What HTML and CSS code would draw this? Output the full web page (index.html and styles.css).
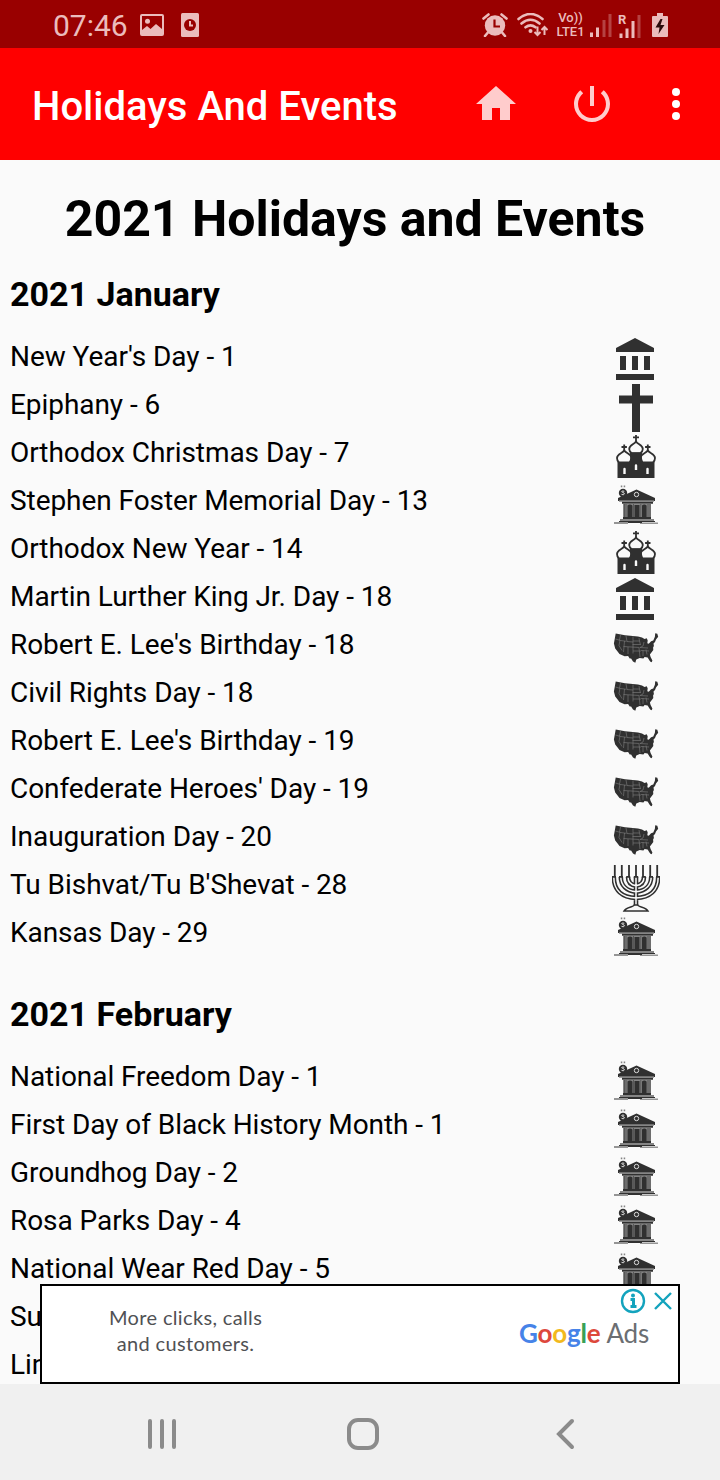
FILE: index.html
```html
<!DOCTYPE html>
<html lang="en">
<head>
<meta charset="UTF-8" />
<meta name="viewport" content="width=device-width, initial-scale=1.0"/>
<title>Holidays And Events</title>
<link rel="stylesheet" href="styles.css">
</head>
<body>

<!-- Icon shapes used by the list -->
<svg class="sprites" xmlns="http://www.w3.org/2000/svg">
  <symbol id="federal" viewBox="0 0 24 24">
    <path d="M4 10v7h3v-7H4zm6 0v7h3v-7h-3zM2 22h19v-3H2v3zm14-12v7h3v-7h-3zM11.500 1L2 6v2h19V6l-9.500-5z"/>
  </symbol>
  <symbol id="cross" viewBox="0 0 48 48">
    <path d="M20 0h8v11.500h13v8H28V48h-8V19.500H7v-8h13z"/>
  </symbol>
  <symbol id="orthodox" viewBox="0 0 48 48">
    <path d="M5.500 29.500H18V19.500h12v10h12.500V46h-37z"/>
    <path class="dome" d="M24 9.500c2 3 6.800 3.500 6.800 7.500 0 2-1.200 3.300-2.500 4.200h-8.600c-1.300-.9-2.500-2.200-2.500-4.200 0-4 4.800-4.500 6.800-7.500z"/>
    <path class="dome" d="M12.200 18.500c2 3 7.300 3.200 7.300 7.500 0 1.800-.9 3.500-2 4.500H7c-1.100-1-2-2.700-2-4.500 0-4.300 5.200-4.500 7.200-7.500zM35.800 18.500c2 3 7.200 3.200 7.200 7.500 0 1.800-.9 3.500-2 4.500H30.500c-1.100-1-2-2.700-2-4.500 0-4.300 5.300-4.500 7.300-7.500z"/>
    <path d="M18.500 20.500h11l.5 6 1.500 6-2 2H19l-2-2 1.200-6z"/>
    <path class="thin" d="M24 3v7M21 5.300h6M12.200 12.500v7M9.500 15h5.400M35.800 12.500v7M33.100 15h5.400"/>
    <path class="gap" d="M11.300 42v-5a1.200 1.200 0 0 1 2.400 0v5zM22.800 38v-4.500a1.200 1.200 0 0 1 2.400 0V38zM34.300 42v-5a1.200 1.200 0 0 1 2.400 0v5z"/>
  </symbol>
  <symbol id="observance" viewBox="0 0 48 48">
    <path d="M24.500 9.500L43 18v3H6v-3z"/>
    <path class="grey" d="M7 20.300h35v1.500H7z"/>
    <path d="M10 21.800h31v2H10zM11 37h28v2.200H11z"/>
    <path class="grey" d="M11 23.800h28V37H11z"/>
    <path d="M15.500 25.500q2.500-2 5 0V37h-5zM22.500 25h5v12h-5zM30 25.500q2.300-2 4.600 0V37H30z"/>
    <path class="lines" d="M12.500 24v13M14 24v13M21.500 24v13M28.800 24v13M36 24v13M38 24v13"/>
    <path class="grey" d="M8 39h34v2H8z"/>
    <path d="M7 41h36v1H7zM2 42.400h14v1H2zM16 42h14v1H16zM28 42.800h18v.8H28z"/>
    <circle cx="11" cy="13" r="4.200"/>
    <path class="gapline" d="M12.300 11.300q-2.600-1-2.600.5 2.800.9 2.700 2.200-1 1.500-2.900.3"/>
    <circle class="ring" cx="24.500" cy="14.500" r="2.200"/>
    <path class="grey" d="M8.800 5.500h1.500V7.200H8.800zM11.700 5.500h1.500V7.200h-1.500z"/>
  </symbol>
  <symbol id="states" viewBox="0 0 48 48">
    <path d="M3.700 9.500l9.300 1.700 13 1.300 4 1 2.500 1.500 2.300-.8.900 2.300-.4 2.700 1.400.6 2.400-2.600 2.200-.6 1.600-3.800L43.200 9.300l2.100.4.900 3-2.200 2.700-1 2.500-1.500 1.500.4 2.500-.8 1.700.2 2.500-3.400 4.500.7 2.300 1.800 3.500-.7 1.800-1.600-.6-2.500-4.200-3-.3-1.200 1.300-3.700-.3-3.400 1.500-1 3.200-2.300-1.200-1.900-3-1.400-.2-1.600-2.300-3.500.2-5.100-2.200-1.900-2.500-2.400-3-1.300-5.200z"/>
    <path class="borders" d="M8.500 11l-1 5M3.500 15l5 1.500 6 .8M8 16l-1 5.500 3 5M12.500 17l-1 11M14 12l1 5.500 6 .5M21 12.500v17M11.500 22.500l16 1M16 23v7M21 17h6.500l1 4M20.500 20.500h8M27 14l.5 3M27 24l1 9M21 27h8M32 18l-1 4-3 1.500 8 .5M29 26.500l8 .5M31 26v6M34 25.500l1 5"/>
  </symbol>
  <symbol id="menorah" viewBox="0 0 48 48">
    <path class="arm" d="M24 13v30M1.800 13c0 13.500 8.500 20.500 22.200 21 13.700-.5 22.200-7.500 22.200-21M8.800 13c0 8.500 6 14 15.200 14.800 9.200-.8 15.200-6.300 15.200-14.800M16 13c0 5 3 8 8 8.800 5-.8 8-3.800 8-8.800"/>
    <path class="arm-in" d="M24 13v30M1.800 13c0 13.500 8.500 20.500 22.200 21 13.700-.5 22.200-7.500 22.200-21M8.800 13c0 8.500 6 14 15.200 14.800 9.200-.8 15.200-6.300 15.200-14.800M16 13c0 5 3 8 8 8.800 5-.8 8-3.800 8-8.800"/>
    <path class="thin" d="M2.800 1v11.500M9.800 1v11.500M17 1v11.500M24 1v11.500M31 1v11.500M38.200 1v11.500M45.200 1v11.500M0 12.800h4M7 12.800h4M14.200 12.800h4M21.800 12.800h4.400M29.800 12.800h4M37 12.800h4M44 12.800h4"/>
    <path class="foot" d="M22.300 41c-.3 2-8.300 2-10.300 6h24c-2-4-10-4-10.300-6z"/>
  </symbol>
</svg>

<div class="phone">

  <!-- Status bar -->
  <div class="status-bar">
    <span class="clock">07:46</span>
    <svg class="picture" width="24" height="22" viewBox="0 0 24 22">
      <path fill-rule="evenodd" d="M2 0h20a2 2 0 0 1 2 2v18a2 2 0 0 1-2 2H2a2 2 0 0 1-2-2V2A2 2 0 0 1 2 0zM2 2v14l5-4 3.500 3L16 10l6 5V2z"/>
      <circle cx="7.500" cy="7.200" r="2.500"/>
    </svg>
    <svg class="alarm-note" width="18" height="24" viewBox="0 0 18 24">
      <rect width="18" height="24" rx="1.500"/>
      <circle class="hole" cx="9" cy="12" r="6"/>
      <path class="hand" d="M9 8v4.500h3"/>
    </svg>

    <svg class="alarm" width="26" height="24" viewBox="0 0 26 24">
      <circle cx="13" cy="12.500" r="10.200"/>
      <path class="hole-line" d="M12.500 6.500v7H18"/>
      <path class="stroke" d="M1.500 5.500l5-4M24.500 5.500l-5-4M5.500 20l-2.500 3M20.500 20l2.500 3"/>
    </svg>
    <svg class="wifi" width="31" height="24" viewBox="0 0 31 24">
      <path class="stroke" d="M1.500 6q12-10 24 0M4.500 10.500q9-7.500 18 0M8.500 14.300q5-4 10 0"/>
      <circle cx="13.500" cy="18" r="2"/>
      <path class="arrow" d="M20.500 13.500v8M17.500 19l3 3 3-3M27.500 22v-8M24.500 17l3-3 3 3"/>
    </svg>
    <span class="volte"><span>Vo))</span><span>LTE1</span></span>
    <svg class="signal" width="22" height="24" viewBox="0 0 22 24">
      <path d="M0 19.500h3V24H0zM6 14.500h3V24H6z"/>
      <path class="dim" d="M12.500 7h3v17h-3zM18.500 1h3v23h-3z"/>
    </svg>
    <svg class="signal-r" width="23" height="25" viewBox="0 0 23 25">
      <text x="0" y="10.500">R</text>
      <path d="M1.500 20.500h3V25h-3zM7.500 15.500h3V25h-3zM13.500 8h3v17h-3z"/>
      <path class="dim" d="M19.500 2h3v23h-3z"/>
    </svg>
    <svg class="battery" width="16" height="24" viewBox="0 0 16 24">
      <path d="M5 0h6v3h4a1 1 0 0 1 1 1v19a1 1 0 0 1-1 1H1a1 1 0 0 1-1-1V4a1 1 0 0 1 1-1h4z"/>
      <path class="bolt" d="M8.500 6L3.500 14.500h4L6.500 21l6-9H8.500l2-6z"/>
    </svg>
  </div>

  <!-- App bar -->
  <header class="app-bar">
    <div class="app-title">Holidays And Events</div>
    <svg class="home" viewBox="0 0 24 24"><path d="M10 20v-6h4v6h5v-8h3L12 3 2 12h3v8z"/></svg>
    <svg class="power" viewBox="0 0 24 24"><path d="M13 3h-2v10h2V3zm4.830 2.170l-1.420 1.420C17.990 7.860 19 9.810 19 12c0 3.870-3.130 7-7 7s-7-3.130-7-7c0-2.190 1.010-4.140 2.580-5.420L6.170 5.170C4.230 6.820 3 9.260 3 12c0 4.970 4.030 9 9 9s9-4.030 9-9c0-2.740-1.230-5.180-3.170-6.830z"/></svg>
    <svg class="more" viewBox="0 0 24 24"><circle cx="12" cy="6" r="2"/><circle cx="12" cy="12" r="2"/><circle cx="12" cy="18" r="2"/></svg>
  </header>

  <main class="content">
    <h1>2021 Holidays and Events</h1>

    <h2>2021 January</h2>
    <ul>
      <li>New Year's Day - 1 <svg><use href="#federal"/></svg></li>
      <li>Epiphany - 6 <svg><use href="#cross"/></svg></li>
      <li>Orthodox Christmas Day - 7 <svg><use href="#orthodox"/></svg></li>
      <li>Stephen Foster Memorial Day - 13 <svg><use href="#observance"/></svg></li>
      <li>Orthodox New Year - 14 <svg><use href="#orthodox"/></svg></li>
      <li>Martin Lurther King Jr. Day - 18 <svg><use href="#federal"/></svg></li>
      <li>Robert E. Lee's Birthday - 18 <svg><use href="#states"/></svg></li>
      <li>Civil Rights Day - 18 <svg><use href="#states"/></svg></li>
      <li>Robert E. Lee's Birthday - 19 <svg><use href="#states"/></svg></li>
      <li>Confederate Heroes' Day - 19 <svg><use href="#states"/></svg></li>
      <li>Inauguration Day - 20 <svg><use href="#states"/></svg></li>
      <li>Tu Bishvat/Tu B'Shevat - 28 <svg><use href="#menorah"/></svg></li>
      <li>Kansas Day - 29 <svg><use href="#observance"/></svg></li>
    </ul>

    <h2>2021 February</h2>
    <ul>
      <li>National Freedom Day - 1 <svg><use href="#observance"/></svg></li>
      <li>First Day of Black History Month - 1 <svg><use href="#observance"/></svg></li>
      <li>Groundhog Day - 2 <svg><use href="#observance"/></svg></li>
      <li>Rosa Parks Day - 4 <svg><use href="#observance"/></svg></li>
      <li>National Wear Red Day - 5 <svg><use href="#observance"/></svg></li>
      <li>Su</li>
      <li>Lin</li>
    </ul>

    <!-- Banner ad over the bottom of the list -->
    <div class="ad">
      <p>More clicks, calls<br>and customers.</p>
      <div class="ad-logo">
        <span class="google"><span class="blue">G</span><span class="red">o</span><span class="yellow">o</span><span class="blue">g</span><span class="green">l</span><span class="red">e</span></span>
        <span class="ads">Ads</span>
      </div>
      <svg class="ad-choices" width="54" height="26" viewBox="0 0 54 26">
        <circle cx="13" cy="13" r="11"/>
        <path class="info" d="M10.500 11.500h3V19M10.500 18.500h6"/>
        <circle class="dot" cx="13" cy="7.500" r="2"/>
        <path d="M35 5l16 16M51 5L35 21"/>
      </svg>
    </div>
  </main>

  <!-- System navigation -->
  <nav class="nav-bar">
    <svg width="30" height="32" viewBox="0 0 30 32"><path d="M3 3v26M15 3v26M27 3v26"/></svg>
    <svg width="32" height="32" viewBox="0 0 32 32"><rect x="2" y="2" width="28" height="28" rx="9"/></svg>
    <svg width="20" height="32" viewBox="0 0 20 32"><path d="M17 3L4 16l13 13"/></svg>
  </nav>

</div>
</body>
</html>
```
FILE: styles.css
```css
body {
  margin: 0;
  font-family: Roboto, sans-serif;
  background: #fafafa;
  color: #000;
}
svg {
  display: block;
  flex-shrink: 0;
}
.sprites {
  display: none;
}
.phone {
  width: 720px;
  height: 1480px;
  display: flex;
  flex-direction: column;
  overflow: hidden;
}

/* Status bar */
.status-bar {
  height: 48px;
  flex-shrink: 0;
  display: flex;
  align-items: center;
  padding: 2px 52px 0 53px;
  box-sizing: border-box;
  background: #990000;
  color: #ebbcbc;
  fill: #ebbcbc;
}
.clock {
  width: 87px;
  font-size: 30px;
  line-height: 46px;
  padding-top: 1px;
}
.alarm-note {
  margin-left: 17px;
}
.hole {
  fill: #990000;
}
.hole-line {
  fill: none;
  stroke: #990000;
  stroke-width: 2.2;
}
.hand, .status-bar .stroke, .arrow {
  fill: none;
  stroke: #ebbcbc;
  stroke-width: 2;
}
.status-bar .stroke {
  stroke-width: 2.6;
  stroke-linecap: round;
}
.alarm {
  margin-left: auto;
}
.wifi {
  margin-left: 9px;
}
.volte {
  width: 31px;
  margin-left: 7px;
  display: flex;
  flex-direction: column;
  align-items: center;
  font: 500 13px/14px Roboto, sans-serif;
}
.signal {
  margin-left: 4px;
}
.signal-r {
  margin-left: 6px;
  overflow: visible;
}
.signal-r text {
  font: bold 13px Roboto, sans-serif;
}
.dim {
  opacity: 0.35;
}
.battery {
  margin-left: 11px;
}
.bolt {
  fill: #2c0b0b;
}

/* App bar */
.app-bar {
  height: 112px;
  flex-shrink: 0;
  display: flex;
  align-items: center;
  padding: 0 20px 0 32px;
  box-sizing: border-box;
  background: #ff0000;
  color: #fff;
}
.app-title {
  flex: 1;
  font-size: 40px;
  font-weight: 500;
  line-height: 48px;
  padding-top: 6px;
  white-space: nowrap;
}
.app-bar svg {
  width: 48px;
  height: 48px;
  fill: #ffcccc;
}
.app-bar .power {
  margin-left: 48px;
}
.app-bar .more {
  margin-left: 36px;
  fill: #fff;
}

/* List */
.content {
  flex: 1;
  min-height: 0;
  position: relative;
  overflow: hidden;
  background: #fafafa;
}
h1 {
  margin: 0;
  padding: 29px 10px 0 0;
  font-size: 50px;
  line-height: 60px;
  text-align: center;
}
h2 {
  height: 48px;
  margin: 0;
  padding: 30px 10px 18px;
  font-size: 34px;
  line-height: 48px;
}
h1 + h2 {
  padding-top: 21px;
}
ul {
  list-style: none;
  margin: 0;
  padding: 0 60px 0 10px;
}
li {
  height: 48px;
  display: flex;
  justify-content: space-between;
  font-size: 28px;
  line-height: 42px;
  letter-spacing: -0.06px;
  white-space: nowrap;
}
li svg {
  width: 48px;
  height: 48px;
  fill: #303030;
}
.dome {
  fill: #fafafa;
  stroke: #303030;
  stroke-width: 1.8;
}
.gap {
  fill: #fafafa;
}
.thin {
  fill: none;
  stroke: #303030;
  stroke-width: 1.8;
}
.grey {
  fill: #858585;
}
.lines {
  stroke: #444;
  stroke-width: 0.7;
}
.gapline, .ring {
  fill: none;
  stroke: #ddd;
  stroke-width: 1;
}
.borders {
  fill: none;
  stroke: #808080;
  stroke-width: 0.6;
}
.arm {
  fill: none;
  stroke: #303030;
  stroke-width: 4.6;
}
.arm-in {
  fill: none;
  stroke: #fafafa;
  stroke-width: 1.5;
}
.foot {
  fill: #fafafa;
  stroke: #303030;
  stroke-width: 1.6;
}

/* Ad banner */
.ad {
  position: absolute;
  left: 40px;
  bottom: 0;
  width: 640px;
  height: 100px;
  box-sizing: border-box;
  border: 2px solid #000;
  background: #fff;
  display: flex;
  justify-content: space-between;
  align-items: center;
  padding: 0 29px 0 67px;
}
.ad p {
  margin: 0;
  padding-bottom: 8px;
  font: 20px/26px Lato, sans-serif;
  letter-spacing: 0.35px;
  text-align: center;
  color: #505154;
}
.ad-logo {
  display: flex;
  gap: 6px;
  padding-bottom: 2px;
  font: 26px/32px Lato, sans-serif;
  letter-spacing: -0.2px;
  color: #6b6e72;
}
.google {
  font-weight: bold;
}
.blue { color: #4683e8; }
.red { color: #dd483c; }
.yellow { color: #f2b91d; }
.green { color: #38a156; }
.ad-choices {
  position: absolute;
  top: 2px;
  right: 4px;
  fill: none;
  stroke: #13a3bd;
  stroke-width: 2.4;
}
.ad-choices .info {
  stroke-width: 3;
}
.ad-choices .dot {
  fill: #13a3bd;
  stroke: none;
}

/* Navigation bar */
.nav-bar {
  height: 96px;
  flex-shrink: 0;
  display: grid;
  grid-template-columns: 30px 32px 20px;
  column-gap: 170px;
  align-items: center;
  padding: 4px 0 0 147px;
  box-sizing: border-box;
  background: #f0f0f0;
}
.nav-bar svg {
  fill: none;
  stroke: #8b8b8b;
  stroke-width: 4;
  stroke-linecap: round;
}
.nav-bar svg:last-child {
  margin-left: 6px;
}
```
